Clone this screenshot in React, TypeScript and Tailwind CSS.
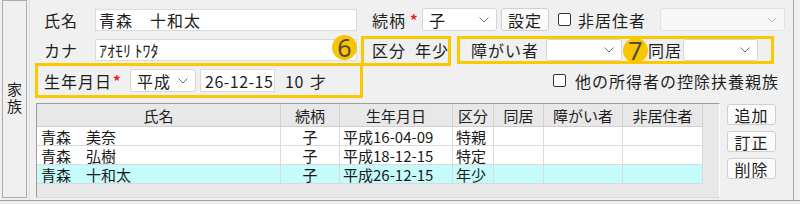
import React from "react";

const font = "font-['Noto_Sans_CJK_JP','Noto_Sans',sans-serif]";

function Chevron({ color = "#707070" }: { color?: string }) {
  return (
    <svg width="10" height="6" viewBox="0 0 10 6">
      <path d="M0.5 0.5 L5 5 L9.5 0.5" fill="none" stroke={color} strokeWidth="1" />
    </svg>
  );
}

function Select({ className, value, disabled }: { className: string; value?: string; disabled?: boolean }) {
  return (
    <div
      className={`${className} flex items-center justify-between rounded-[3px] border pl-[6px] pr-[7px] ${
        disabled ? "border-[#e2e2e2] bg-[#f7f7f7]" : "border-[#d6d6d6] bg-white"
      }`}
    >
      <span className="text-[16px] leading-none tracking-[1px] text-[#1e1e1e]">{value}</span>
      <Chevron color={disabled ? "#c4c4c4" : "#707070"} />
    </div>
  );
}

function Checkbox() {
  return <div className="h-[13px] w-[13px] shrink-0 rounded-[2px] border border-[#333] bg-white" />;
}

function Asterisk({ className }: { className: string }) {
  return <span className={`${className} text-[15px] font-bold leading-none text-[#e8202a]`}>*</span>;
}

const cols = "grid grid-cols-[244px_59px_113px_41px_50px_79px_80px]";

const rows = [
  { name: "青森　美奈", rel: "子", birth: "平成16-04-09", kubun: "特親", sel: false },
  { name: "青森　弘樹", rel: "子", birth: "平成18-12-15", kubun: "特定", sel: false },
  { name: "青森　十和太", rel: "子", birth: "平成26-12-15", kubun: "年少", sel: true },
];

function Table() {
  const headers = ["氏名", "続柄", "生年月日", "区分", "同居", "障がい者", "非居住者"];
  return (
    <div className="h-[95px] w-[684px] border-l border-t border-r border-b border-l-[#9c9c9c] border-t-[#9c9c9c] border-r-[#fafafa] border-b-[#d8d8d8] bg-[#e8e8e8]">
      <div className={`${cols} h-[23px] w-[666px] border-b border-[#d0d0d0]`}>
        {headers.map((h) => (
          <div key={h} className="flex items-center justify-center border-r border-[#d0d0d0] text-[15px] leading-none text-[#1e1e1e]">
            {h}
          </div>
        ))}
      </div>
      {rows.map((r) => (
        <div
          key={r.name}
          className={`${cols} h-[19px] w-[666px] border-b border-[#dadada] text-[15px] leading-none text-[#1a1a1a] ${
            r.sel ? "bg-[#c6fbfb]" : "bg-white"
          }`}
        >
          <div className="flex items-center border-r border-[#dadada] pl-[4px]">{r.name}</div>
          <div className="flex items-center justify-center border-r border-[#dadada]">{r.rel}</div>
          <div className="flex items-center border-r border-[#dadada] pl-[3px]">{r.birth}</div>
          <div className="flex items-center border-r border-[#dadada] pl-[3px]">{r.kubun}</div>
          <div className="border-r border-[#dadada]" />
          <div className="border-r border-[#dadada]" />
          <div className="border-r border-[#dadada]" />
        </div>
      ))}
    </div>
  );
}

function SideButton({ label }: { label: string }) {
  return (
    <div className="flex h-[21px] w-[49px] items-center justify-center rounded-[3px] border border-[#d0d0d0] bg-[#fbfbfb] text-[16px] leading-none tracking-[1px] text-[#1e1e1e]">
      {label}
    </div>
  );
}

function Badge({ n, className }: { n: string; className: string }) {
  return (
    <div
      className={`${className} absolute flex h-[25px] w-[25px] items-center justify-center rounded-full bg-[#f7c600] font-['Noto_Sans',sans-serif] text-[25px] font-normal leading-none text-[#5a4738]`}
    >
      {n}
    </div>
  );
}

export default function App() {
  return (
    <div className={`relative h-[204px] w-[800px] overflow-hidden bg-[#f0f0f0] ${font} text-[#1e1e1e]`}>
      <div className="flex h-[201px] border-b border-[#9e9e9e]">
        <div className="ml-[2px] flex h-[198px] w-[25px] items-center justify-center border border-[#acacac]">
          <span className="text-[15px] leading-none tracking-[2px] [writing-mode:vertical-rl]">家族</span>
        </div>
        <div className="ml-[2px] mr-[6px] flex-1 border-l border-r border-l-[#dcdcdc] border-r-[#a6a6a6] pl-[6px]">
          {/* 1行目 */}
          <div className="mt-[8px] flex h-[23px] items-center pl-[8px] text-[16px] leading-none tracking-[1px]">
            <span className="w-[51px]">氏名</span>
            <div className="flex h-[22px] w-[262px] items-center border border-[#dadada] bg-white pl-[3px]">青森　十和太</div>
            <span className="ml-[15px] w-[38px]">続柄</span>
            <Asterisk className="w-[12px]" />
            <Select className="h-[23px] w-[75px]" value="子" />
            <div className="ml-[4px] flex h-[23px] w-[48px] items-center justify-center rounded-[3px] border border-[#cfcfcf] bg-[#fbfbfb]">
              設定
            </div>
            <div className="ml-[9px]">
              <Checkbox />
            </div>
            <span className="ml-[7px] w-[68px]">非居住者</span>
            <Select className="ml-[14px] h-[23px] w-[125px]" disabled />
          </div>

          {/* 2行目 */}
          <div className="mt-[8px] flex h-[22px] items-center pl-[8px] text-[16px] leading-none tracking-[1px]">
            <span className="w-[51px]">カナ</span>
            <div className="flex h-[22px] w-[262px] items-center border border-[#dadada] bg-white pl-[3px] tracking-normal">
              ｱｵﾓﾘ ﾄﾜﾀ
            </div>
            <span className="ml-[15px] w-[43px]">区分</span>
            <span className="w-[56px]">年少</span>
            <span className="w-[75px]">障がい者</span>
            <Select className="h-[22px] w-[76px]" />
            <span className="ml-[26px] w-[35px]">同居</span>
            <Select className="h-[22px] w-[75px]" />
          </div>

          {/* 3行目 */}
          <div className="mt-[8px] flex h-[23px] items-center pl-[8px] text-[16px] leading-none tracking-[1px]">
            <span className="w-[69px]">生年月日</span>
            <Asterisk className="w-[17px]" />
            <Select className="h-[23px] w-[66px]" value="平成" />
            <div className="ml-[4px] flex h-[23px] w-[75px] items-center border border-[#dadada] bg-white pl-[4px] tracking-[0.5px]">
              26-12-15
            </div>
            <span className="ml-[10px] w-[25px] tracking-[0.5px]">10</span>
            <span className="w-[20px]">才</span>
            <div className="ml-[223px]">
              <Checkbox />
            </div>
            <span className="ml-[9px] tracking-[1px]">他の所得者の控除扶養親族</span>
          </div>

          {/* 一覧 */}
          <div className="mt-[11px] flex">
            <Table />
            <div className="ml-[7px] mt-[1px] flex flex-col gap-[6px]">
              <SideButton label="追加" />
              <SideButton label="訂正" />
              <SideButton label="削除" />
            </div>
          </div>
        </div>
      </div>

      {/* 注記枠 */}
      <div className="absolute left-[361px] top-[36px] h-[30px] w-[90px] border-[3px] border-[#fcc800]" />
      <div className="absolute left-[457px] top-[36px] h-[28px] w-[317px] border-[3px] border-[#fcc800]" />
      <div className="absolute left-[35px] top-[63px] h-[35px] w-[328px] border-[3px] border-[#fcc800]" />
      <Badge n="6" className="left-[332px] top-[35px]" />
      <Badge n="7" className="left-[623px] top-[38px]" />
    </div>
  );
}
